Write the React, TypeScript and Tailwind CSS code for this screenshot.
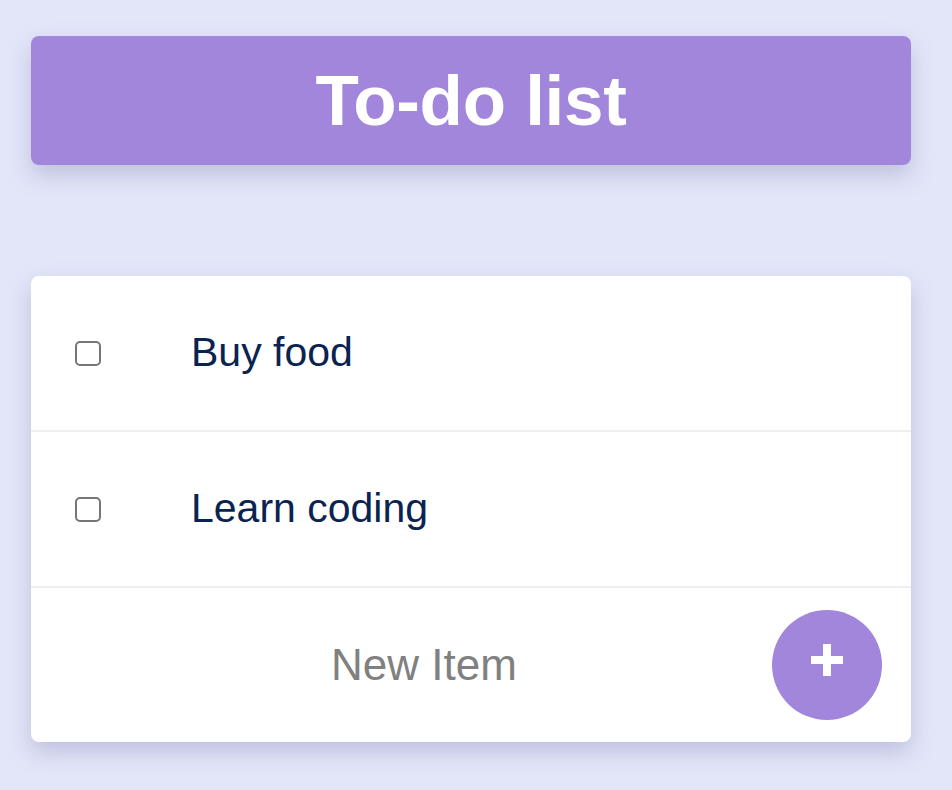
import React, { useState } from 'react';

interface TodoItem {
  id: number;
  text: string;
  done: boolean;
}

const App: React.FC = () => {
  const [items, setItems] = useState<TodoItem[]>([
    { id: 1, text: 'Buy food', done: false },
    { id: 2, text: 'Learn coding', done: false },
  ]);
  const [draft, setDraft] = useState('');

  const toggle = (id: number) =>
    setItems(items.map((it) => (it.id === id ? { ...it, done: !it.done } : it)));

  const addItem = () => {
    if (!draft.trim()) return;
    setItems([...items, { id: Date.now(), text: draft.trim(), done: false }]);
    setDraft('');
  };

  return (
    <div className="min-h-screen bg-[#e3e6f9] pt-9 pl-[31px] font-['Liberation_Sans',Arial,sans-serif]">
      <div className="w-[880px]">
        {/* Heading */}
        <div className="h-[129px] flex items-center justify-center rounded-lg bg-[#a286dc] shadow-[0_10px_22px_rgba(120,125,170,0.35)]">
          <h1 className="text-[71px] font-bold text-white tracking-[-0.3px] leading-none">To-do list</h1>
        </div>

        {/* List */}
        <div className="mt-[111px] rounded-lg bg-white shadow-[0_10px_22px_rgba(120,125,170,0.35)] overflow-hidden">
          {items.map((item) => (
            <div
              key={item.id}
              className="h-[156px] flex items-center border-b-2 border-[#efefef]"
              onClick={() => toggle(item.id)}
            >
              <div className="ml-[44px] w-[26px] h-[25px] rounded-[5px] border-2 border-[#767676] flex items-center justify-center">
                {item.done && <div className="w-3 h-3 rounded-sm bg-[#767676]" />}
              </div>
              <p
                className={`ml-[90px] text-[41px] font-light text-[#0b2350] ${
                  item.done ? 'line-through' : ''
                }`}
              >
                {item.text}
              </p>
            </div>
          ))}

          <div className="h-[154px] flex items-center">
            <input
              value={draft}
              onChange={(e) => setDraft(e.target.value)}
              placeholder="New Item"
              className="flex-1 min-w-0 pl-[45px] text-center text-[44px] text-[#808080] placeholder:text-[#808080] outline-none bg-transparent"
            />
            <button
              onClick={addItem}
              className="mr-[29px] w-[110px] h-[110px] rounded-full bg-[#a286dc] flex items-center justify-center"
            >
              <svg width="32" height="32" viewBox="0 0 32 32" className="mb-[10px]">
                <rect x="12" y="0" width="8" height="32" fill="white" />
                <rect x="0" y="12" width="32" height="8" fill="white" />
              </svg>
            </button>
          </div>
        </div>
      </div>
    </div>
  );
};

export default App;
